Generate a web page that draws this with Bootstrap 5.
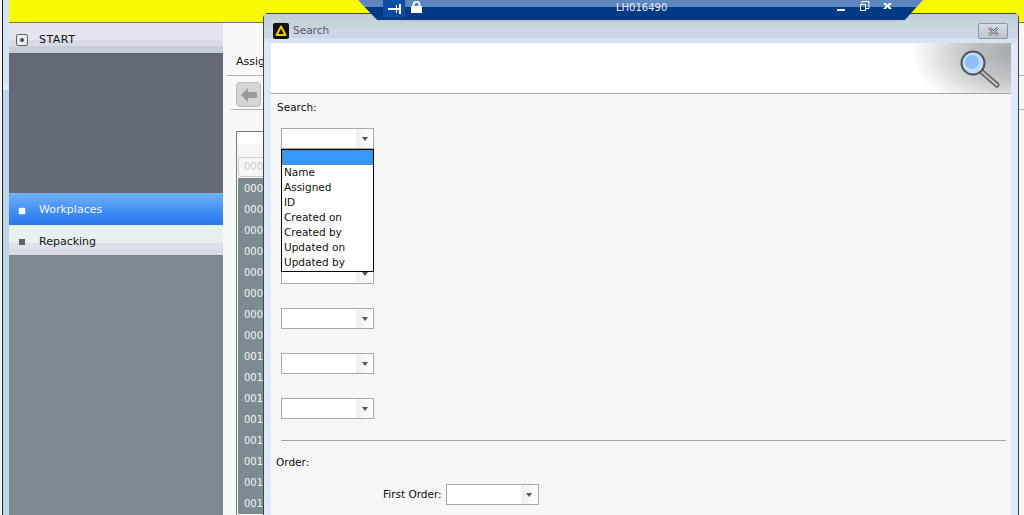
<!DOCTYPE html>
<html lang="en">

<head>
    <meta charset="UTF-8">
    <title>Search</title>
    <link href="https://cdn.jsdelivr.net/npm/bootstrap@5.3.0/dist/css/bootstrap.min.css" rel="stylesheet">
    <style>
        html, body { height: 515px; overflow: hidden; }
        body { position: relative; background: #f7f8f8; font-family: "DejaVu Sans", Verdana, sans-serif; font-size: 10.5px; color: #111; }

        /* app behind the dialog */
        .app-edge { width: 9px; flex: none; height: 515px; background: linear-gradient(90deg, #f4f4f4 0 2px, #222 2px 3px, transparent 3px), linear-gradient(#d5e4f4 0 85px, #e2eaf6 85px 90px, #bcd4e8 90px); }
        .app-body { flex-grow: 1; min-width: 0; }
        .app-top { height: 23px; background: #f9f900; border-bottom: 1px solid #77776a; }
        .side-col { width: 214px; flex: none; height: 492px; background: #7b8b91; }
        .side-start { height: 31px; padding: 4px 0 0 7px; background: linear-gradient(#e4e5ee 0 17px, #d8dbe4 17px 23px, #c6ced6 23px); border-bottom: 1px solid #5c6470; font-size: 11px; letter-spacing: .5px; }
        .side-dark { height: 139px; background: #636976; }
        .side-active { height: 32px; padding: 3px 0 0 10px; background: linear-gradient(#73b2fb, #3d8cf3 60%, #2a78ec); color: #f2f8ff; font-size: 11px; }
        .side-item { height: 31px; padding: 4px 0 0 10px; background: linear-gradient(#e8f1ee 0 18px, #dde1ea 18px 24px, #d5dae3 24px); border-bottom: 1px solid #80858c; font-size: 11px; }
        .start-ico { width: 12px; height: 12px; margin-right: 11px; border: 1px solid #5f6670; border-radius: 2px; background: #eceef3; }
        .start-ico::after { content: ""; width: 4px; height: 4px; border-radius: 50%; background: #4a505a; }
        .dot-ico { width: 6px; height: 6px; margin-right: 14px; background: #5d6470; }
        .side-active .dot-ico { background: #fff; box-shadow: 0 0 2px #cfe6ff; }
        .main-col { padding: 31px 0 0 3px; }
        .assign-row { height: 22px; width: 100%; padding-left: 10px; border-bottom: 1px solid #b0b0b0; font-size: 11px; }
        .back-btn { width: 25px; height: 25px; background: #d3d6d6; border: 1px solid #b9bcbc; border-radius: 4px; margin: 6px 0 2px 10px; }
        .tool-line { border-top: 1px solid #b0b0b0; height: 22px; margin-left: 5px; }
        .grid-box { width: 40px; height: 385px; margin-left: 10px; border: 1px solid #777a8c; border-right: 0; background: #fff; font-size: 10px; }
        .grid-blank { height: 12px; }
        .grid-head { height: 34px; padding: 13px 0 0 1px; background: #f3f4f4; color: #ccc; }
        .grid-filter { height: 20px; width: 40px; line-height: 18px; border: 1px solid #d0d0d0; border-radius: 3px; background: #f6f6f6; padding-left: 5px; }
        .grid-rows { margin-left: 1px; background: #7b8b91; color: #f2f6f6; }
        .grid-cell { height: 21px; line-height: 21px; padding-left: 6px; }

        /* title strip of the remote session */
        .conn-bar { position: absolute; left: 358px; top: 0; z-index: 3; width: 565px; height: 22px; background: linear-gradient(#5c86bd 0 7px, #003a84 7px 20px, #c3c9d0 20px); clip-path: polygon(0 0, 100% 0, calc(100% - 20px) 100%, 21px 100%); color: #e8f0fa; font-size: 10px; }
        .conn-pin { width: 22px; height: 17px; background: #0a4ea6; margin-left: 25px; }
        .conn-lock { margin: 1px 0 0 6px; }
        .conn-id { position: absolute; left: 258px; top: 0; }
        .conn-ctrl { position: absolute; left: 479px; top: 0; }

        /* search dialog */
        .search-win { position: absolute; left: 263px; top: 13px; width: 756px; height: 502px; background: #f6f6f6; border: 1px solid #444; border-bottom: 0; border-radius: 5px 5px 0 0; }
        .win-title { height: 29px; background: linear-gradient(#c3cdd8 0 5px, #c3d4da 5px 14px, #cfd5e6 14px 24px, #d7e3f5 24px); color: #4d5a66; padding: 9px 10px 0 9px; }
        .win-logo { width: 16px; height: 16px; background: #111; border-radius: 2px; }
        .win-close { width: 30px; height: 16px; border: 1px solid #8a96a4; border-radius: 2px; background: linear-gradient(#d5dce6, #bcc6d1); }
        .win-inner { border-left: 7px solid #dfe8f8; border-right: 7px solid #dfe8f8; height: 473px; }
        .win-banner { height: 51px; background: #fff; border-bottom: 1px solid #a6a6a6; position: relative; }
        .banner-shade { position: absolute; right: 0; top: 0; width: 100px; height: 50px; background: radial-gradient(ellipse 100px 60px at 100% 20%, #a5a8ad 0, #c8cacd 50%, #fff 100%); }
        .search-label { padding: 7px 0 0 6px; line-height: 13px; }
        .combo-list { padding: 14px 0 0 10px; }
        .combo-box { width: 93px; height: 21px; border: 1px solid #aaa; background: #fff; }
        .combo-arrow { width: 17px; height: 19px; background: linear-gradient(90deg, #eee, #fff); }
        .combo-arrow::after { content: ""; border: 3.5px solid transparent; border-top: 4px solid #555; border-bottom: 0; }
        .combo-gap { margin-bottom: 24px; }
        .combo-hidden { margin-top: 114px; }
        .combo-drop { position: absolute; left: 17px; top: 135px; width: 93px; height: 123px; background: #fff; border: 1px solid #000; color: #111; z-index: 2; }
        .drop-pick { height: 15px; background: #3399ff; outline: 1px dotted rgba(190, 110, 40, .6); outline-offset: -1px; }
        .drop-line { height: 15px; line-height: 15px; padding-left: 2px; }
        .win-rule { border-top: 1px solid #a6a6a6; margin: 21px 5px 0 10px; }
        .order-label { padding: 15px 0 0 5px; line-height: 13px; }
        .order-row { padding: 15px 0 0 112px; }
        .order-name { margin-right: 4px; }
    </style>
</head>

<body>
    <div class="d-flex">
        <div class="app-edge"></div>
        <div class="app-body">
            <div class="app-top"></div>
            <div class="d-flex">
                <div class="side-col">
                    <div class="side-start d-flex align-items-center">
                        <span class="start-ico d-flex align-items-center justify-content-center"></span>
                        <span>START</span>
                    </div>
                    <div class="side-dark"></div>
                    <div class="side-active d-flex align-items-center">
                        <span class="dot-ico"></span><span>Workplaces</span>
                    </div>
                    <div class="side-item d-flex align-items-center">
                        <span class="dot-ico"></span><span>Repacking</span>
                    </div>
                </div>
                <div class="main-col flex-grow-1">
                    <div class="assign-row">Assigned</div>
                    <div class="back-btn d-flex align-items-center justify-content-center">
                        <svg width="16" height="14" viewBox="0 0 16 14"><path d="M7 0v4h9v6H7v4L0 7z" fill="#9a9c9c"/></svg>
                    </div>
                    <div class="tool-line"></div>
                    <div class="grid-box">
                        <div class="grid-blank"></div>
                        <div class="grid-head"><div class="grid-filter">000</div></div>
                        <div class="grid-rows">
                            <div class="grid-cell">000</div>
                            <div class="grid-cell">000</div>
                            <div class="grid-cell">000</div>
                            <div class="grid-cell">000</div>
                            <div class="grid-cell">000</div>
                            <div class="grid-cell">000</div>
                            <div class="grid-cell">000</div>
                            <div class="grid-cell">000</div>
                            <div class="grid-cell">001</div>
                            <div class="grid-cell">001</div>
                            <div class="grid-cell">001</div>
                            <div class="grid-cell">001</div>
                            <div class="grid-cell">001</div>
                            <div class="grid-cell">001</div>
                            <div class="grid-cell">001</div>
                            <div class="grid-cell">001</div>
                        </div>
                    </div>
                </div>
            </div>
        </div>
    </div>

    <div class="conn-bar d-flex">
        <div class="conn-pin d-flex align-items-center justify-content-center">
            <svg width="13" height="10" viewBox="0 0 13 10"><path d="M0 4h8V1h1v3h2V0h2v10h-2V6H9v3H8V6H0z" fill="#fff"/></svg>
        </div>
        <svg class="conn-lock" width="11" height="12" viewBox="0 0 11 12"><path d="M0 5h1.500V3.500a4 3.500 0 0 1 8 0V5H11v7H0zM3.500 5h4V3.500a2 2 0 0 0-4 0z" fill="#fff" fill-rule="evenodd"/></svg>
        <span class="conn-id">LH016490</span>
        <svg class="conn-ctrl" width="60" height="14" viewBox="0 0 60 14">
            <path d="M0 9h8v2H0z" fill="#fff"/>
            <path d="M25 3.500V1.500h7v7h-3M23.500 4.500h5v6h-5z" fill="none" stroke="#fff"/>
            <path d="M46 3h3l1.500 2L52 3h3l-3 3 3 3h-3l-1.500-2L49 9h-3l3-3z" fill="#fff"/>
        </svg>
    </div>

    <div class="search-win">
        <div class="win-title d-flex align-items-start">
            <span class="win-logo d-flex align-items-center justify-content-center">
                <svg width="12" height="12" viewBox="0 0 12 12"><path d="M6 1.500 10.500 10h-9z" fill="none" stroke="#f6c800" stroke-width="2" stroke-linejoin="round"/></svg>
            </span>
            <span class="ms-1">Search</span>
            <span class="win-close ms-auto d-flex align-items-center justify-content-center">
                <svg width="11" height="9" viewBox="0 0 11 9"><path d="M1 1l9 7M10 1L1 8" stroke="#555" stroke-width="2.500"/><path d="M1 1l9 7M10 1L1 8" stroke="#fff" stroke-width="1"/></svg>
            </span>
        </div>
        <div class="win-inner">
            <div class="win-banner">
                <div class="banner-shade"></div>
                <svg class="position-absolute end-0 top-0" width="60" height="50" viewBox="0 0 60 50">
                    <path d="M31 29 46 42" stroke="#555" stroke-width="5" stroke-linecap="round"/>
                    <path d="M31 29 46 42" stroke="#bbb" stroke-width="2.500" stroke-linecap="round"/>
                    <circle cx="22" cy="20" r="11.500" fill="#c3dcf8" stroke="#4e5358" stroke-width="2"/>
                    <circle cx="21" cy="19" r="7" fill="#8fbff6"/>
                </svg>
            </div>
            <div class="search-label">Search:</div>
            <div class="combo-list">
                <div class="combo-box d-flex justify-content-end"><span class="combo-arrow d-flex align-items-center justify-content-center"></span></div>
                <div class="combo-box combo-hidden combo-gap d-flex justify-content-end"><span class="combo-arrow d-flex align-items-center justify-content-center"></span></div>
                <div class="combo-box combo-gap d-flex justify-content-end"><span class="combo-arrow d-flex align-items-center justify-content-center"></span></div>
                <div class="combo-box combo-gap d-flex justify-content-end"><span class="combo-arrow d-flex align-items-center justify-content-center"></span></div>
                <div class="combo-box d-flex justify-content-end"><span class="combo-arrow d-flex align-items-center justify-content-center"></span></div>
            </div>
            <div class="combo-drop">
                <div class="drop-pick"></div>
                <div class="drop-line">Name</div>
                <div class="drop-line">Assigned</div>
                <div class="drop-line">ID</div>
                <div class="drop-line">Created on</div>
                <div class="drop-line">Created by</div>
                <div class="drop-line">Updated on</div>
                <div class="drop-line">Updated by</div>
            </div>
            <div class="win-rule"></div>
            <div class="order-label">Order:</div>
            <div class="order-row d-flex align-items-center">
                <span class="order-name">First Order:</span>
                <div class="combo-box d-flex justify-content-end"><span class="combo-arrow d-flex align-items-center justify-content-center"></span></div>
            </div>
        </div>
    </div>

    <script src="https://cdn.jsdelivr.net/npm/bootstrap@5.3.0/dist/js/bootstrap.bundle.min.js"></script>
</body>

</html>
